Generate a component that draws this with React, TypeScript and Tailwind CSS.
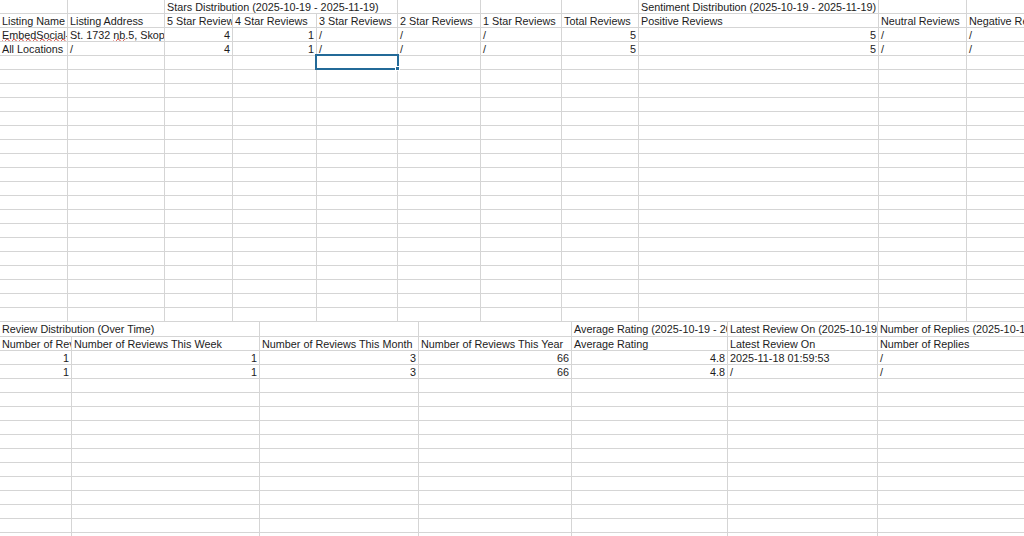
import React from "react";

const UPW = ["w-[68px]", "w-[97px]", "w-[68px]", "w-[84px]", "w-[81px]", "w-[83px]", "w-[81px]", "w-[77px]", "w-[240px]", "w-[88px]", "w-[120px]"];
const LOWW = ["w-[72px]", "w-[188px]", "w-[159px]", "w-[153px]", "w-[156px]", "w-[150px]", "w-[200px]"];

type Val = React.ReactNode;

function Cell({ w, v, right }: { w: string; v?: Val; right?: boolean }) {
  return (
    <div
      className={
        "shrink-0 h-full border-r border-b border-[#d5d5d5] overflow-hidden whitespace-nowrap px-[2px] leading-[15px] " +
        w +
        (right ? " text-right" : "")
      }
    >
      {v}
    </div>
  );
}

function Row({ widths, vals }: { widths: string[]; vals?: Val[] }) {
  return (
    <div className="flex h-[14px]">
      {widths.map((w, i) => {
        const v = vals ? vals[i] : undefined;
        return <Cell key={i} w={w} v={v} right={typeof v === "number"} />;
      })}
    </div>
  );
}

// spell-check wave under a word
function Squiggle({ children }: { children: React.ReactNode }) {
  return (
    <span className="underline decoration-wavy decoration-[#d9372b] decoration-1 underline-offset-[-1px] [text-decoration-skip-ink:none]">
      {children}
    </span>
  );
}

const upperData: Val[][] = [
  ["Listing Name", "Listing Address", "5 Star Reviews", "4 Star Reviews", "3 Star Reviews", "2 Star Reviews", "1 Star Reviews", "Total Reviews", "Positive Reviews", "Neutral Reviews", "Negative Reviews"],
  [
    <>
      <Squiggle>EmbedSocial</Squiggle>-Skopje
    </>,
    <>
      St. 1732 <Squiggle>nb</Squiggle>.5, Skopje
    </>,
    4, 1, "/", "/", "/", 5, 5, "/", "/",
  ],
  ["All Locations", "/", 4, 1, "/", "/", "/", 5, 5, "/", "/"],
];

const lowerData: Val[][] = [
  ["Number of Reviews Today", "Number of Reviews This Week", "Number of Reviews This Month", "Number of Reviews This Year", "Average Rating", "Latest Review On", "Number of Replies"],
  [1, 1, 3, 66, 4.8, "2025-11-18 01:59:53", "/"],
  [1, 1, 3, 66, 4.8, "/", "/"],
];

export default function App() {
  const upperEmpty = Array.from({ length: 19 });
  const lowerEmpty = Array.from({ length: 13 });

  return (
    <div className="relative w-[1024px] h-[536px] overflow-hidden bg-white text-[10.8px] text-[#1c1c1c] font-['Liberation_Sans',Arial,sans-serif]">
      {/* stars / sentiment sheet */}
      <div className="flex flex-col">
        <div className="flex h-[14px]">
          <Cell w="w-[68px]" />
          <Cell w="w-[97px]" />
          <Cell w="w-[233px]" v="Stars Distribution (2025-10-19 - 2025-11-19)" />
          <Cell w="w-[83px]" />
          <Cell w="w-[81px]" />
          <Cell w="w-[77px]" />
          <Cell w="w-[240px]" v="Sentiment Distribution (2025-10-19 - 2025-11-19)" />
          <Cell w="w-[88px]" />
          <Cell w="w-[120px]" />
        </div>
        {upperData.map((vals, i) => (
          <Row key={i} widths={UPW} vals={vals} />
        ))}
        {upperEmpty.map((_, i) => (
          <Row key={"ue" + i} widths={UPW} />
        ))}
      </div>

      {/* review distribution sheet */}
      <div className="flex flex-col">
        <div className="flex h-[15px]">
          <Cell w="w-[260px]" v="Review Distribution (Over Time)" />
          <Cell w="w-[159px]" />
          <Cell w="w-[153px]" />
          <Cell w="w-[156px]" v="Average Rating (2025-10-19 - 2025-11-19)" />
          <Cell w="w-[150px]" v="Latest Review On (2025-10-19 - 2025-11-19)" />
          <Cell w="w-[200px]" v="Number of Replies (2025-10-19 - 2025-11-19)" />
        </div>
        {lowerData.map((vals, i) => (
          <Row key={i} widths={LOWW} vals={vals} />
        ))}
        {lowerEmpty.map((_, i) => (
          <Row key={"le" + i} widths={LOWW} />
        ))}
      </div>

      {/* selected cell */}
      <div className="absolute left-[315px] top-[54px] w-[84px] h-[16px] border-2 border-[#236a98]" />
      <div className="absolute left-[395px] top-[66px] w-[5px] h-[5px] bg-[#236a98] border border-white" />
    </div>
  );
}
